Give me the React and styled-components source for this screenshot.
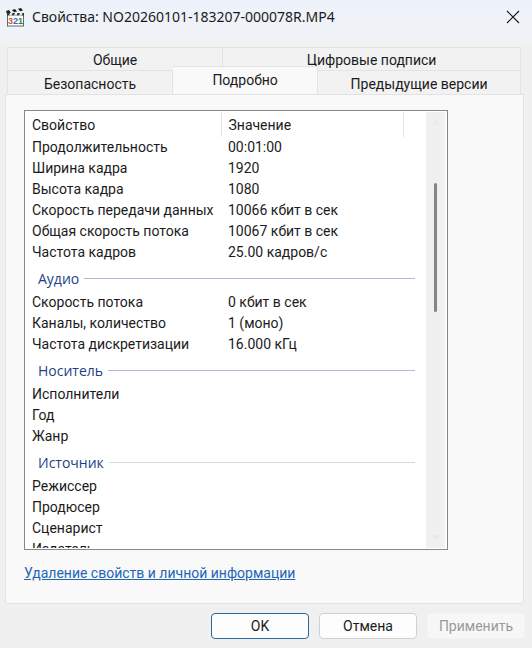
import { useState } from "react";
import styled, { createGlobalStyle } from "styled-components";

const GlobalStyle = createGlobalStyle`
    * {
        box-sizing: border-box;
    }
    body {
        margin: 0;
        background-color: #f0f0f0;
    }
    button {
        font-family: inherit;
    }
`;

const Dialog = styled.div`
    height: 100vh;
    display: flex;
    flex-direction: column;
    overflow: hidden;
    background: linear-gradient(#edf2fa, #f0f3f7 34px, #f0f0f0 48px);
    color: #1b1b1b;
    font-family: Roboto, "Liberation Sans", sans-serif;
    font-size: 14px;
`;

const TitleBar = styled.header`
    height: 47px;
    flex-shrink: 0;
    display: flex;
    align-items: flex-start;
    gap: 7px;
    padding: 7px 12px 0 6px;
`;

const Title = styled.h1`
    flex: 1;
    margin: 0;
    font-family: "Noto Sans", "Open Sans", sans-serif;
    font-size: 14px;
    line-height: 20px;
    font-weight: 400;
    white-space: nowrap;
`;

const CloseButton = styled.button`
    display: flex;
    padding: 3px 0;
    border: none;
    background: none;
`;

const Tabs = styled.div`
    flex-shrink: 0;
    padding: 0 11px 0 7px;
`;

const TabRow = styled.div`
    display: flex;
    height: ${props => props.$front ? "24px" : "23px"};
    border-left: 1px solid #e3e3e3;
    align-items: flex-end;
`;

const Tab = styled.button`
    flex: ${props => props.$grow} 1 0;
    height: ${props => props.$active ? "28px" : "100%"};
    padding: ${props => props.$active ? "0 0 2px" : "2px 0 0"};
    z-index: ${props => props.$active ? 1 : 0};
    border: 1px solid #e3e3e3;
    border-left: none;
    border-bottom: none;
    background-color: ${props => props.$active ? "#f9f9f9" : "#f2f2f2"};
    color: #1b1b1b;
    font-size: 14px;
    line-height: 18px;
    white-space: nowrap;
`;

const Panel = styled.main`
    flex: 1;
    min-height: 0;
    display: flex;
    flex-direction: column;
    margin: 0 8px 0 5px;
    padding: 15px 75px 20px 18px;
    border: 1px solid #e3e3e3;
    border-radius: 0 0 3px 3px;
    background-color: #f9f9f9;
`;

const List = styled.div`
    flex: 1;
    min-height: 0;
    display: flex;
    padding: 1px 2px 1px 0;
    border: 1px solid #828790;
    background-color: #fff;
`;

const ListBody = styled.div`
    flex: 1;
    overflow: hidden;
`;

const Table = styled.table`
    width: 100%;
    border-collapse: collapse;
    table-layout: fixed;
`;

const NameCol = styled.col`
    width: 196px;
`;

const EndCol = styled.col`
    width: 23px;
`;

const HeadCell = styled.th`
    height: 25px;
    padding: 0 0 0 7px;
    border-right: ${props => props.$last ? "none" : "1px solid #e5e5e5"};
    font-weight: 400;
    line-height: 20px;
    text-align: left;
`;

const Cell = styled.td`
    height: 21px;
    padding: 0 0 0 7px;
    line-height: 21px;
    white-space: nowrap;
`;

const GroupCell = styled.th`
    height: 29px;
    padding: 2px 11px 0 13px;
    font-weight: 400;
    text-align: left;
`;

const GroupTitle = styled.div`
    display: flex;
    align-items: center;
    gap: 5px;
    color: #1e3f86;
    font-family: "Open Sans", "Noto Sans", sans-serif;
    line-height: 21px;

    &::after {
        content: "";
        flex: 1;
        height: 1px;
        background-color: ${props => props.$faded ? "#d5d8de" : "#b0bcd6"};
    }
`;

const ScrollBar = styled.div`
    width: 19px;
    flex-shrink: 0;
    display: flex;
    flex-direction: column;
    align-items: center;
    padding: 8px 0;
    background-color: #f0f0f0;
`;

const Track = styled.div`
    flex: 1;
    padding-top: 58px;
`;

const Thumb = styled.div`
    width: 3px;
    height: 129px;
    border-radius: 2px;
    background-color: #858585;
`;

const RemoveLink = styled.a`
    align-self: flex-start;
    margin-top: 13px;
    color: #1f66b4;
    line-height: 20px;
    white-space: nowrap;
`;

const Actions = styled.footer`
    flex-shrink: 0;
    display: flex;
    justify-content: flex-end;
    gap: 10px;
    padding: 9px 7px;
`;

const ActionButton = styled.button`
    width: 98px;
    height: 26px;
    padding: 0;
    border: 1px solid ${props => props.$primary ? "#2a6a9e" : "#d0d0d0"};
    border-radius: 4px;
    background-color: #fdfdfd;
    color: #1b1b1b;
    font-size: 14px;

    &:disabled {
        border-color: #f3f3f3;
        background-color: #f7f7f7;
        color: #9a9a9a;
    }
`;

const backTabs = [
    { title: "Общие", grow: 215 },
    { title: "Цифровые подписи", grow: 298 },
];

const frontTabs = [
    { title: "Безопасность", grow: 165 },
    { title: "Подробно", grow: 145 },
    { title: "Предыдущие версии", grow: 203 },
];

const groups = [
    {
        rows: [
            ["Продолжительность", "00:01:00"],
            ["Ширина кадра", "1920"],
            ["Высота кадра", "1080"],
            ["Скорость передачи данных", "10066 кбит в сек"],
            ["Общая скорость потока", "10067 кбит в сек"],
            ["Частота кадров", "25.00 кадров/с"],
        ],
    },
    {
        title: "Аудио",
        rows: [
            ["Скорость потока", "0 кбит в сек"],
            ["Каналы, количество", "1 (моно)"],
            ["Частота дискретизации", "16.000 кГц"],
        ],
    },
    {
        title: "Носитель",
        rows: [["Исполнители", ""], ["Год", ""], ["Жанр", ""]],
    },
    {
        title: "Источник",
        faded: true,
        rows: [["Режиссер", ""], ["Продюсер", ""], ["Сценарист", ""], ["Издатель", ""]],
    },
];

const ClapperIcon = () => (
    <svg width="19" height="20" viewBox="0 0 19 20" aria-hidden="true">
        <path d="M1 5 16 1l1 3L1 7z" fill="#eee" />
        <path d="m0 4 3-1 2 3-4 1zM6 3l3-1 2 2.500-3 .8zM12 1.800 15 1l2 2.500-3 .8z" fill="#222" />
        <rect x="1.500" y="7.500" width="16" height="11.500" fill="#fff" stroke="#666" />
        <path d="M1 6h17v2.500H1z" fill="#333" />
        <path d="M4 6h2.500l-1 2.500H3zM9 6h2.500l-1 2.500H8zM14 6h2.500l-1 2.500H13z" fill="#eee" />
        <g fontFamily="Liberation Sans, sans-serif" fontSize="9" fontWeight="700">
            <text x="2" y="17" fill="#c65a28">3</text>
            <text x="7" y="17" fill="#3b62b8">2</text>
            <text x="12" y="17" fill="#318044">1</text>
        </g>
    </svg>
);

const ScrollArrow = ({ down }) => (
    <svg width="8" height="5" viewBox="0 0 8 5" aria-hidden="true">
        <path d={down ? "M0 0h8L4 5z" : "M0 5h8L4 0z"} fill="#e9e9e9" />
    </svg>
);

const App = () => {
    const [active, setActive] = useState("Подробно");

    const renderTab = (tab) => (
        <Tab
            key={tab.title}
            type="button"
            role="tab"
            aria-selected={active === tab.title}
            $active={active === tab.title}
            $grow={tab.grow}
            onClick={() => setActive(tab.title)}
        >
            {tab.title}
        </Tab>
    );

    return (
        <Dialog>
            <GlobalStyle />
            <TitleBar>
                <ClapperIcon />
                <Title>Свойства: NO20260101-183207-000078R.MP4</Title>
                <CloseButton type="button" aria-label="Закрыть">
                    <svg width="14" height="14" viewBox="0 0 14 14">
                        <path d="M1 1l12 12M13 1L1 13" stroke="#1b1b1b" strokeWidth="1.200" />
                    </svg>
                </CloseButton>
            </TitleBar>
            <Tabs role="tablist">
                <TabRow>{backTabs.map(renderTab)}</TabRow>
                <TabRow $front>{frontTabs.map(renderTab)}</TabRow>
            </Tabs>
            <Panel>
                <List>
                    <ListBody>
                        <Table>
                            <colgroup>
                                <NameCol />
                                <col />
                                <EndCol />
                            </colgroup>
                            <thead>
                                <tr>
                                    <HeadCell>Свойство</HeadCell>
                                    <HeadCell>Значение</HeadCell>
                                    <HeadCell $last />
                                </tr>
                            </thead>
                            {groups.map((group, i) => (
                                <tbody key={i}>
                                    {group.title && (
                                        <tr>
                                            <GroupCell colSpan={3}>
                                                <GroupTitle $faded={group.faded}>{group.title}</GroupTitle>
                                            </GroupCell>
                                        </tr>
                                    )}
                                    {group.rows.map(([name, value]) => (
                                        <tr key={name}>
                                            <Cell>{name}</Cell>
                                            <Cell colSpan={2}>{value}</Cell>
                                        </tr>
                                    ))}
                                </tbody>
                            ))}
                        </Table>
                    </ListBody>
                    <ScrollBar>
                        <ScrollArrow />
                        <Track>
                            <Thumb />
                        </Track>
                        <ScrollArrow down />
                    </ScrollBar>
                </List>
                <RemoveLink href="#">Удаление свойств и личной информации</RemoveLink>
            </Panel>
            <Actions>
                <ActionButton type="button" $primary>OK</ActionButton>
                <ActionButton type="button">Отмена</ActionButton>
                <ActionButton type="button" disabled>Применить</ActionButton>
            </Actions>
        </Dialog>
    );
};

export default App;
